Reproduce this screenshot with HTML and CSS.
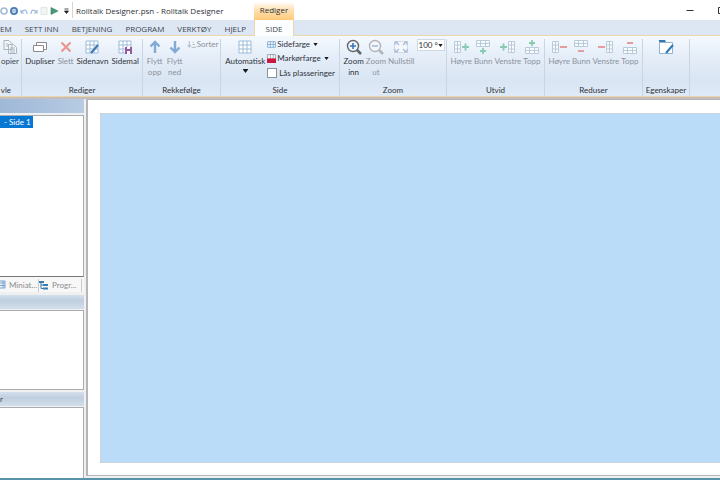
FILE: index.html
```html
<!DOCTYPE html>
<html lang="nb">
<head>
<meta charset="utf-8">
<title>Rolltalk Designer</title>
<link rel="stylesheet" href="styles.css">
</head>
<body>
<svg class="defs" aria-hidden="true">
  <symbol id="grid" viewBox="0 0 16 16"><rect x="2" y="2" width="12" height="12" rx="1" fill="#fff"/><path d="M2 2h12v12H2zM6 2v12M10 2v12M2 6h12M2 10h12" fill="none" stroke="#9dbbd8"/></symbol>
  <symbol id="cols" viewBox="0 0 16 16"><path d="M1.500 2.500h6v11h-6zM4.500 2v12M1 6h7M1 10h7" fill="#f8fbfe" stroke="#b9cada"/></symbol>
  <symbol id="rows" viewBox="0 0 16 16"><path d="M1.500 1.500h13v6h-13zM1 4.500h14M5.500 1v7M10.500 1v7" fill="#f8fbfe" stroke="#b9cada"/></symbol>
  <symbol id="tri" viewBox="0 0 6 4"><path d="M0 0h6L3 4z" fill="#17191d"/></symbol>
  <symbol id="lens" viewBox="0 0 16 16"><circle cx="7" cy="7" r="5.500" fill="#f4f8fc" stroke="currentColor" stroke-width="1.400"/><path d="M11 11l4 4" stroke="currentColor" stroke-width="2.500"/></symbol>
</svg>
<div class="app">
  <header class="titlebar">
    <div class="quick">
      <button aria-label="Tilbake"><svg viewBox="0 0 10 10"><circle cx="5" cy="5" r="3" fill="#fff" stroke="#a3bbd4" stroke-width="1.600"/></svg></button>
      <button aria-label="Frem"><svg viewBox="0 0 10 10"><circle cx="5" cy="5" r="3" fill="#fff" stroke="#4b7fb5" stroke-width="2"/><path d="M3.500 5h3" stroke="#4b7fb5"/></svg></button>
      <button aria-label="Angre"><svg viewBox="0 0 10 10"><path d="M2 4v3h3M2 7c2-4 6-4 6 1" fill="none" stroke="#9ab9dc" stroke-width="1.200"/></svg></button>
      <button aria-label="Gjør om"><svg viewBox="0 0 10 10"><path d="M8 4v3H5M8 7C6 3 2 3 2 8" fill="none" stroke="#9ab9dc" stroke-width="1.200"/></svg></button>
      <button aria-label="Side"><svg viewBox="0 0 10 10"><path d="M2 1.500h6v7H2z" fill="#f2f5f3" stroke="#dfe6e3"/></svg></button>
      <button aria-label="Kjør"><svg viewBox="0 0 10 10"><path d="M2 1.500L9 5 2 8.500z" fill="#4a9a78" stroke="#347e60" stroke-width=".6"/></svg></button>
      <button aria-label="Tilpass"><svg viewBox="0 0 10 10"><path d="M3.500 3h4M3.500 5h4L5.500 7.500z" fill="#222" stroke="#222" stroke-width=".8"/></svg></button>
    </div>
    <h1 class="title">Rolltalk Designer.psn - Rolltalk Designer</h1>
    <span class="context">Rediger</span>
    <div class="window">
      <button aria-label="Minimer"><svg viewBox="0 0 10 10"><path d="M1.500 5.500h7" stroke="#333"/></svg></button>
      <button aria-label="Maksimer"><svg viewBox="0 0 10 10"><path d="M.5 2.500h6v6h-6z" fill="none" stroke="#333"/></svg></button>
    </div>
  </header>
  <nav class="tabs">
    <a href="#" class="first">EM</a><a href="#">SETT INN</a><a href="#">BETJENING</a><a href="#">PROGRAM</a><a href="#">VERKTØY</a><a href="#">HJELP</a><a href="#" class="active">SIDE</a>
  </nav>
  <div class="ribbon">
    <section class="group clip"><div class="tools">
      <button class="off dark"><svg viewBox="0 0 16 16"><path d="M2 1.500h5l3 3v6H2zM6.500 5.500h5l3 3v6h-8zM8 9h5M8 11h5M8 13h5M4 5h2M4 7h2" fill="#f4f7fa" stroke="#a9b4bf"/></svg>opier</button>
    </div><h2>vle</h2></section>
    <section class="group edit"><div class="tools">
      <button><svg viewBox="0 0 16 16"><path d="M4.500 3.500h10v7h-10z" fill="#fff" stroke="#8a8a8a"/><path d="M1.500 6.500h10v6h-10z" fill="#fff" stroke="#8a8a8a"/></svg>Dupliser</button>
      <button class="off"><svg viewBox="0 0 16 16"><path d="M3.500 3.500l9 9M12.500 3.500l-9 9" stroke="#e99790" stroke-width="2.200"/></svg>Slett</button>
      <button><svg viewBox="0 0 16 16"><use href="#grid"/><path d="M7 14l7-8" stroke="#3d78b5" stroke-width="2"/></svg>Sidenavn</button>
      <button><svg viewBox="0 0 16 16"><use href="#grid"/><path d="M8 8h7v7H8z" fill="#9357a1"/><path d="M10 8h3v2h-3zM10 12h3v3h-3z" fill="#fff"/></svg>Sidemal</button>
    </div><h2>Rediger</h2></section>
    <section class="group order"><div class="tools">
      <button class="off"><svg viewBox="0 0 16 16"><path d="M8 14V3M3.500 7.500L8 3l4.500 4.500" fill="none" stroke="#83aad7" stroke-width="2.400"/></svg>Flytt<br>opp</button>
      <button class="off"><svg viewBox="0 0 16 16"><path d="M8 2v11M3.500 8.500L8 13l4.500-4.500" fill="none" stroke="#83aad7" stroke-width="2.400"/></svg>Flytt<br>ned</button>
      <button class="off small"><svg viewBox="0 0 8 8"><path d="M2 1v5M.5 4.500L2 6.500l1.500-2M5 2h1M5 4h2M4 6.500h4" fill="none" stroke="#a8b2bf" stroke-width=".8"/></svg>Sorter</button>
    </div><h2>Rekkefølge</h2></section>
    <section class="group page"><div class="tools">
      <button><svg viewBox="0 0 16 16"><use href="#grid"/></svg>Automatisk<svg class="arrow big" viewBox="0 0 6 4"><use href="#tri"/></svg></button>
      <div class="stack">
        <button class="small"><svg viewBox="0 0 8 8"><path d="M.5 1.500h7v5h-7zM3 1v6M5.500 1v6M0 4h8" fill="#eef6fd" stroke="#79a7d3" stroke-width=".7"/></svg>Sidefarge<svg class="arrow" viewBox="0 0 6 4"><use href="#tri"/></svg></button>
        <button class="small"><svg viewBox="0 0 8 8"><path d="M.5.5h7v4h-7zM3 0v5M5.500 0v5" fill="#fff" stroke="#8a91a0" stroke-width=".7"/><path d="M0 4h8v4H0z" fill="#cc163f"/></svg>Markørfarge<svg class="arrow" viewBox="0 0 6 4"><use href="#tri"/></svg></button>
        <label class="check"><input type="checkbox">Lås plasseringer</label>
      </div>
    </div><h2>Side</h2></section>
    <section class="group zoom"><div class="tools">
      <button><svg viewBox="0 0 16 16" color="#62656c"><use href="#lens"/><path d="M4 7h6M7 4v6" stroke="#3478bd" stroke-width="1.600"/></svg>Zoom<br>inn</button>
      <button class="off"><svg viewBox="0 0 16 16" color="#b1b5bb"><use href="#lens"/><path d="M4 7h6" stroke="#a1b9d2" stroke-width="1.500"/></svg>Zoom<br>ut</button>
      <button class="off"><svg viewBox="0 0 16 16"><path d="M1.500 2.500h13v11h-13z" fill="#f4f8fc" stroke="#d3dbe4"/><path d="M2 6V3h3M11 3h3v3M2 10v3h3M11 13h3v-3M6 6L3 3M10 6l3-3M6 10l-3 3M10 10l3 3" fill="none" stroke="#a3bcd4" stroke-width="1.200"/></svg>Nullstill</button>
      <div class="percent"><select aria-label="Zoomprosent"><option>100 °</option></select><svg class="arrow" viewBox="0 0 6 4"><use href="#tri"/></svg></div>
    </div><h2>Zoom</h2></section>
    <section class="group expand"><div class="tools">
      <button class="off"><svg viewBox="0 0 16 16"><use href="#cols"/><path d="M9 8h7M12.500 4.500v7" stroke="#89cbb2" stroke-width="1.800"/></svg>Høyre</button>
      <button class="off"><svg viewBox="0 0 16 16"><use href="#rows"/><path d="M5 12h6M8 9v6" stroke="#89cbb2" stroke-width="1.800"/></svg>Bunn</button>
      <button class="off"><svg viewBox="0 0 16 16"><use href="#cols" x="7"/><path d="M0 8h7M3.500 4.500v7" stroke="#89cbb2" stroke-width="1.800"/></svg>Venstre</button>
      <button class="off"><svg viewBox="0 0 16 16"><use href="#rows" y="7"/><path d="M5 4h6M8 1v6" stroke="#89cbb2" stroke-width="1.800"/></svg>Topp</button>
    </div><h2>Utvid</h2></section>
    <section class="group expand"><div class="tools">
      <button class="off"><svg viewBox="0 0 16 16"><use href="#cols"/><path d="M9 8h7" stroke="#e39491" stroke-width="1.800"/></svg>Høyre</button>
      <button class="off"><svg viewBox="0 0 16 16"><use href="#rows"/><path d="M5 12h6" stroke="#e39491" stroke-width="1.800"/></svg>Bunn</button>
      <button class="off"><svg viewBox="0 0 16 16"><use href="#cols" x="7"/><path d="M0 8h7" stroke="#e39491" stroke-width="1.800"/></svg>Venstre</button>
      <button class="off"><svg viewBox="0 0 16 16"><use href="#rows" y="7"/><path d="M5 4h6" stroke="#e39491" stroke-width="1.800"/></svg>Topp</button>
    </div><h2>Reduser</h2></section>
    <section class="group props"><div class="tools">
      <button aria-label="Egenskaper"><svg viewBox="0 0 16 16"><path d="M1.500 3.500h13v11h-13z" fill="#fff" stroke="#8fb2d3"/><path d="M1 1h6l1 2H1z" fill="#3478b5"/><path d="M8 14l7-8" stroke="#3478b5" stroke-width="2"/></svg></button>
    </div><h2>Egenskaper</h2></section>
  </div>
  <main class="body">
    <aside class="side">
      <div class="bar active"></div>
      <div class="pane tree"><span class="node">- Side 1</span></div>
      <div class="views">
        <button><svg viewBox="0 0 10 10"><path d="M0 1h5v7H0M0 3h5M0 5.500h5M3 1v7" fill="none" stroke="#78a3cf"/></svg>Miniat...</button>
        <button><svg viewBox="0 0 10 10"><path d="M0 1h5v2H0zM4 4h5v2H4zM4 7.500h5v2H4z" fill="#397eae"/><path d="M2 2v6.500h3M2 5h3" fill="none" stroke="#397eae"/></svg>Progr...</button>
      </div>
      <div class="bar"></div>
      <div class="pane mid"></div>
      <div class="bar">r</div>
      <div class="pane last"></div>
    </aside>
    <div class="workspace"><div class="canvas"></div></div>
  </main>
</div>
</body>
</html>
```
FILE: styles.css
```css
* { box-sizing: border-box; }
body { margin: 0; font: 8px/10px Lato, "Open Sans", sans-serif; color: #2e3238; }
h1, h2 { margin: 0; font: inherit; }
button { display: block; padding: 0; border: 0; background: none; font: inherit; color: inherit; white-space: nowrap; }
svg { display: block; flex: none; }
.defs { display: none; }
.app { display: flex; flex-direction: column; height: 100vh; overflow: hidden; background: #fff; border-bottom: 2px solid #5794aa; }

.titlebar { display: flex; height: 20px; flex: none; align-items: center; font-family: "Open Sans", sans-serif; }
.quick { display: flex; width: 73px; height: 16px; flex: none; align-items: center; padding: 2px 0 0 1px; border-right: 1px solid #d4d4d4; }
.quick button { margin-left: -2px; margin-right: 2px; }
.quick svg, .window svg { width: 10px; height: 10px; }
.quick button:last-child { margin-left: 0; }
.title { width: 181px; flex: none; padding: 2px 0 0 3px; font-size: 8px; white-space: nowrap; }
.context { width: 40px; height: 20px; padding-top: 5px; text-align: center; background: linear-gradient(#fff 10%, #ffe3b8 45%, #ffc979); }
.window { display: flex; flex: none; gap: 23px; margin-left: auto; margin-right: -8px; }

.tabs { display: flex; height: 16px; flex: none; padding-right: calc(100% - 294px); font-family: "Open Sans", sans-serif; background: #dde7f4; border-bottom: 1px solid #ecd6ad; }
.tabs a { flex: none; padding: 4px 6px 0 7px; color: #40454d; text-decoration: none; white-space: nowrap; }
.tabs .first { padding-left: 0; }
.tabs .active { width: 40px; height: 16px; padding-inline: 0; margin-left: auto; text-align: center; background: #fcfdfe; border: solid #ecd6ad; border-width: 0 1px; }

.ribbon { display: flex; height: 61px; flex: none; background: linear-gradient(#f4f9fe, #e4edf8 35%, #d9e5f3 75%, #dfeaf7); border-bottom: 1px solid #ead4ab; padding: 3px 0 0; }
.group { display: flex; flex: none; flex-direction: column; justify-content: space-between; border-right: 1px solid #c9d5e3; }
.group h2 { text-align: center; line-height: 11px; white-space: nowrap; }
.tools { display: flex; justify-content: center; align-items: flex-start; gap: 2px; }
.tools button { line-height: 11px; text-align: center; }
.tools button > svg { width: 16px; height: 16px; margin: 0 auto 1px; }
.tools .off { color: #8b929c; }
.tools .dark { color: #40454d; }
.tools .small { display: flex; align-items: center; gap: 1px; }
.tools .small > svg { width: 9px; height: 9px; margin: 0; }
.tools button > .arrow, .percent .arrow { width: 5px; height: 3px; }
.tools .small > .arrow { width: 5px; height: 3px; margin-left: 2px; }
.tools button > .big { width: 7px; height: 4px; margin-top: 2px; }
.clip { width: 22px; overflow: hidden; }
.clip .tools { justify-content: flex-end; padding-right: 2px; }
.clip h2 { display: flex; justify-content: flex-end; padding-right: 10px; }
.edit { width: 121px; }
.edit .tools { gap: 3px; }
.order { width: 78px; }
.order .tools { gap: 4px; padding-left: 2px; }
.page { width: 119px; }
.stack { display: flex; flex-direction: column; gap: 3px; }
.check { display: flex; align-items: center; gap: 2px; height: 11px; white-space: nowrap; }
.check input { appearance: none; width: 10px; height: 10px; margin: 0; border: 1px solid #8a929c; background: #fff; }
.zoom { width: 107px; }
.zoom .tools { padding-left: 2px; }
.percent { display: flex; align-items: center; width: 28px; height: 12px; background: #fff; border: 1px solid #cfd8e3; }
.percent select { appearance: none; width: 20px; padding: 0 0 0 1px; border: 0; background: none; font: inherit; color: inherit; }
.expand { width: 98px; }
.props { width: 47px; }

.body { display: flex; flex: 1; min-height: 0; background: #f0f0f0; border-top: 2px solid #c5bdb9; }
.side { display: flex; flex-direction: column; width: 84px; flex: none; }
.bar { height: 14px; flex: none; color: #40454d; line-height: 14px; background: linear-gradient(#d3dfec, #bfcfdf 40%, #d2deea); }
.bar.active { background: linear-gradient(90deg, #9eb8d7, #b7cbe3); }
.pane { background: #fff; border: 1px solid #a9adb2; border-left: 0; }
.tree { flex: 163; margin-top: 2px; border-bottom-color: #777; }
.node { display: block; width: 33px; height: 12px; padding: 1px 0 0 4px; color: #fff; background: #0878d4; }
.views { display: flex; height: 15px; flex: none; margin-bottom: 3px; padding-top: 2px; color: #8c8c8c; background: #f7f7f7; }
.views button { display: flex; align-items: center; width: 43px; border-right: 1px solid #ccc; }
.views button:first-child { width: 39px; }
.views svg { width: 10px; height: 10px; margin-right: -1px; }
.views button:last-child svg { margin-right: 3px; }
.mid { flex: 80; margin: 1px 0 2px; }
.last { flex: 71; margin-top: 1px; border-bottom: 0; }
.workspace { flex: 1; margin: 0 0 2px 2px; padding: 13px 0 12px 12px; background: #fff; border: solid #b5b5b8; border-width: 1px 0 1px 2px; }
.canvas { height: 100%; background: #badcf8; border: 1px solid #cbd3d8; border-right: 0; }
```
